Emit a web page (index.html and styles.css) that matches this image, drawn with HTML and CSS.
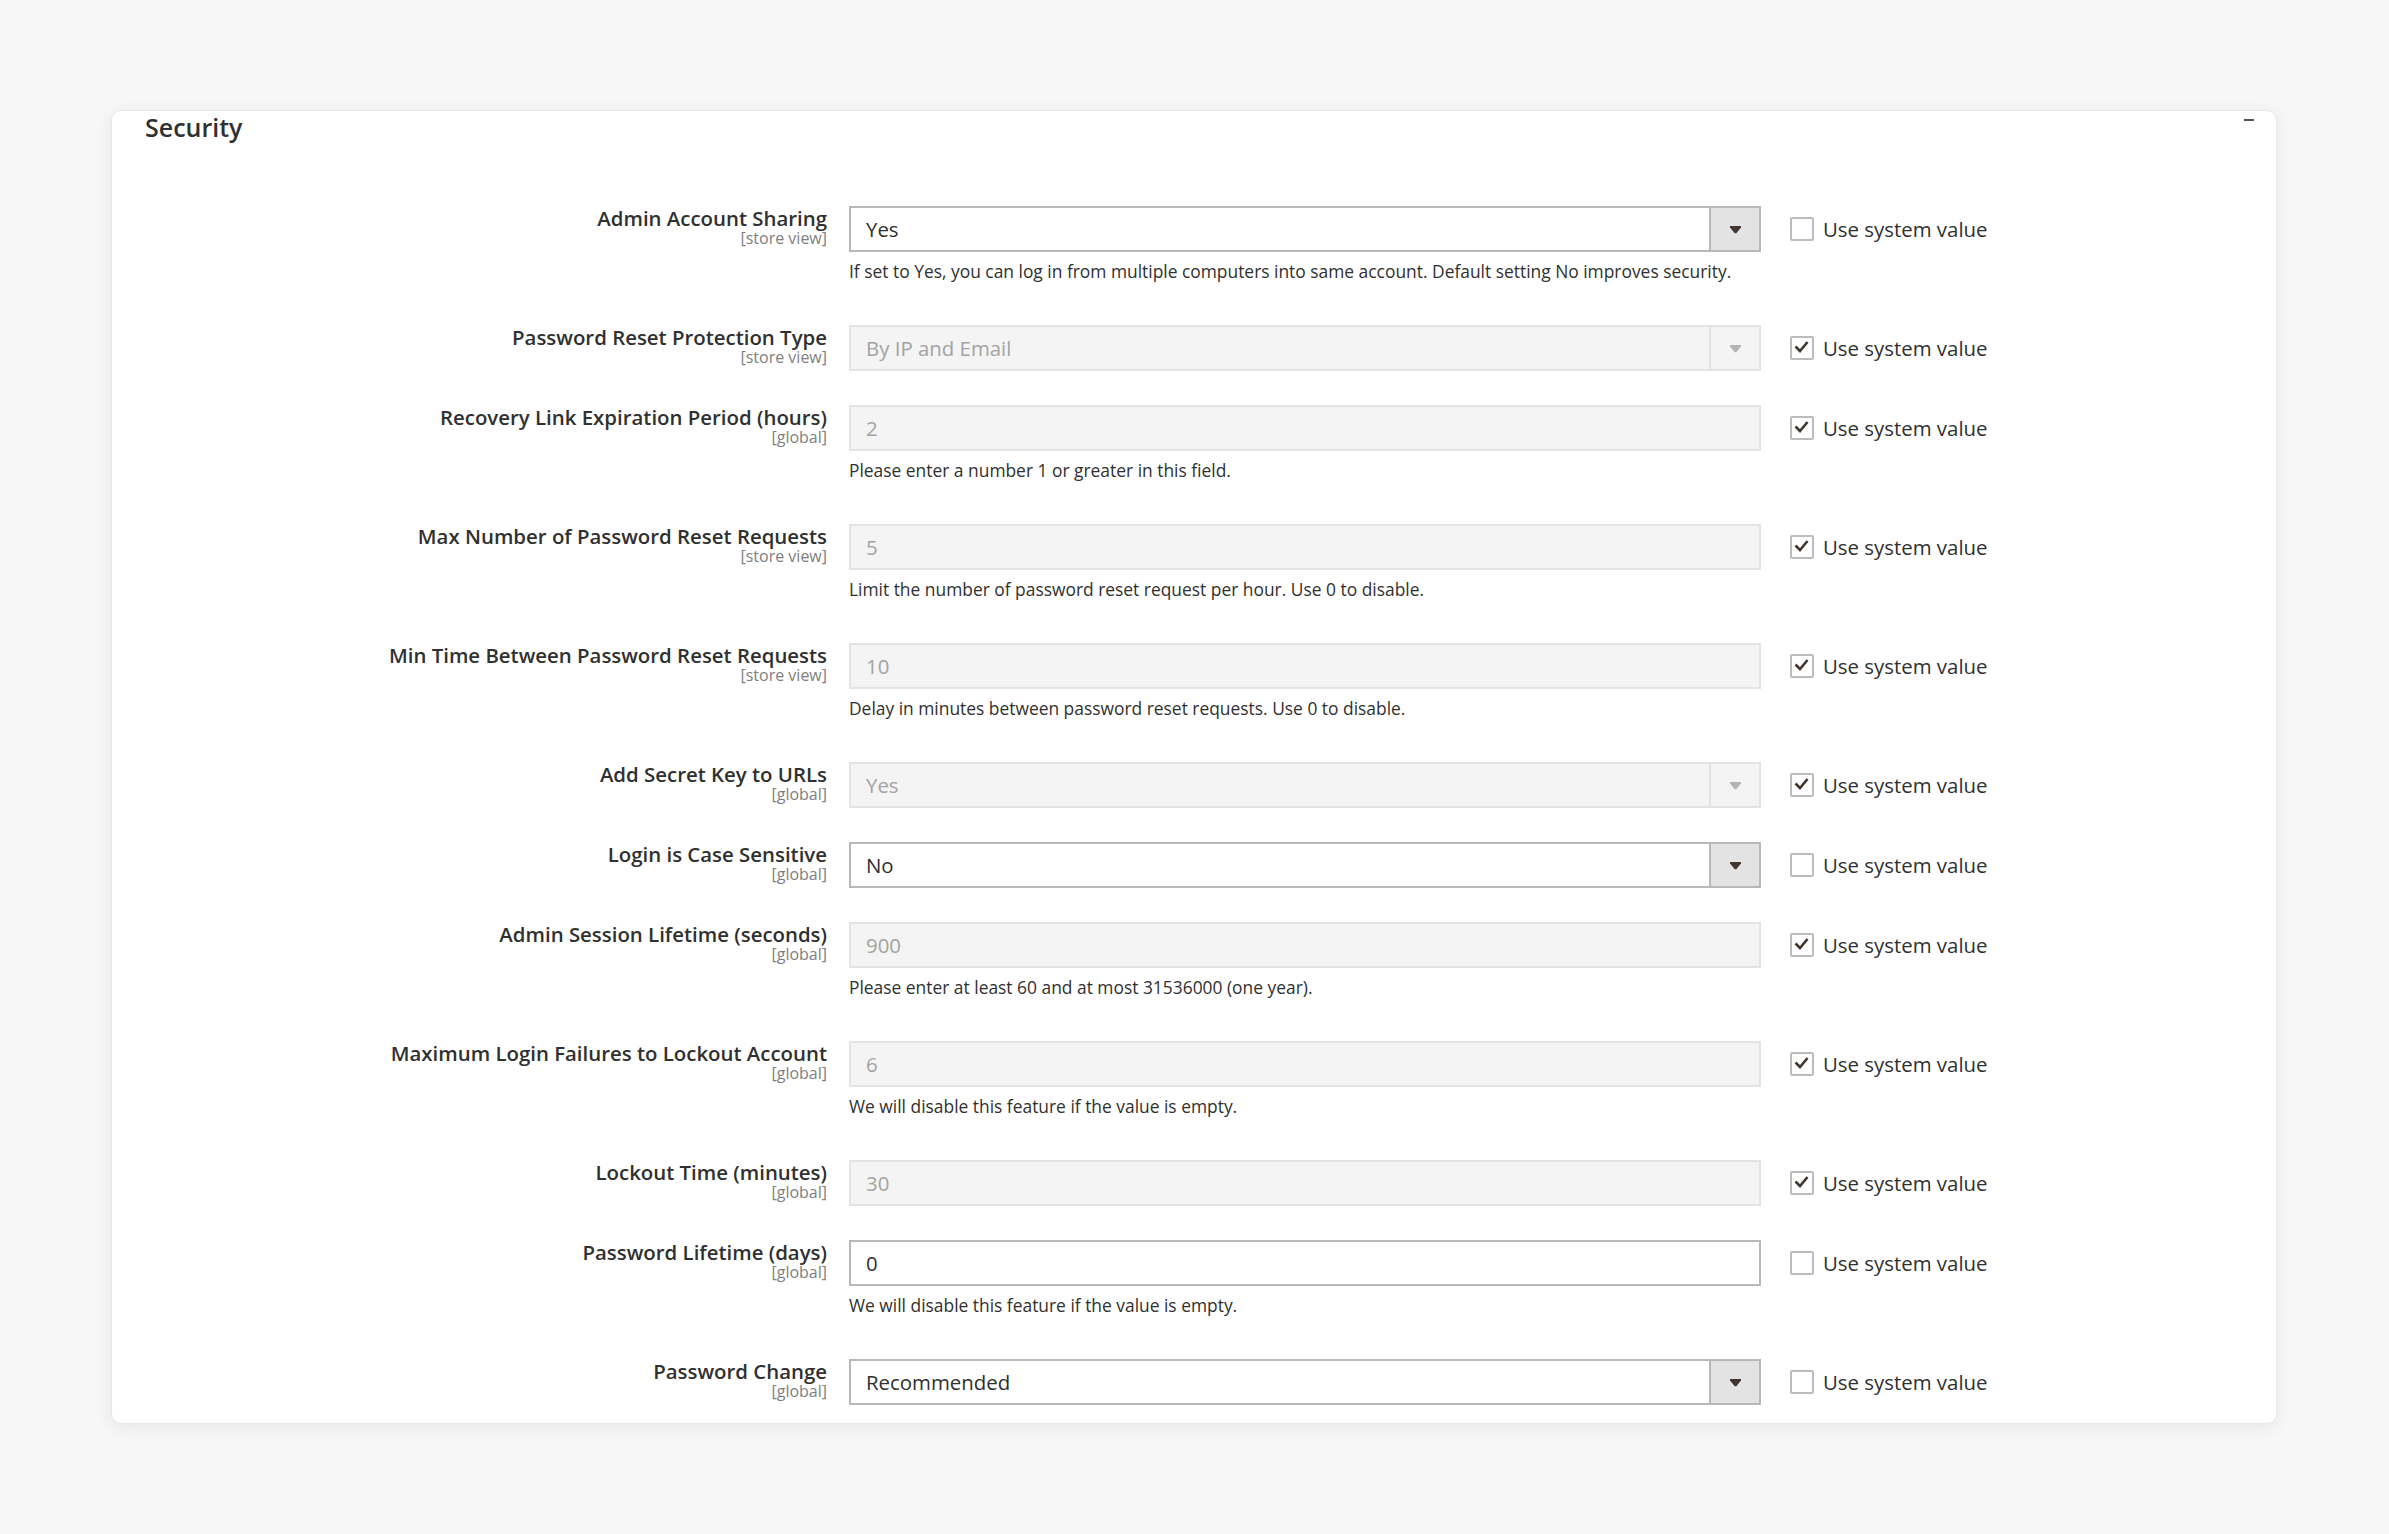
FILE: index.html
```html
<html lang="en">
  <head>
    <meta charset="utf-8">
    <meta name="viewport" content="width=device-width, initial-scale=1">
    <link rel="stylesheet" href="styles.css">
  </head>
  <body>
  <div class="page">
    <div class="card">
      <div class="card_head">
        <div class="card_head__title">Security</div>
        <div class="card_head__toggle"></div>
      </div>

      <div class="form">

        <div class="row">
          <div class="label"><div class="label__title">Admin Account Sharing</div><div class="label__scope">[store view]</div></div>
          <div class="control">
            <div class="field field__select"><div class="field__value">Yes</div><div class="field__arrow"><svg width="11" height="8" viewBox="0 0 11 8"><path d="M0 0H11V1.6L6.3 7.2H4.7L0 1.6Z"/></svg></div></div>
            <div class="note">If set to Yes, you can log in from multiple computers into same account. Default setting No improves security.</div>
          </div>
          <div class="use"><div class="check"></div><span>Use system value</span></div>
        </div>

        <div class="row">
          <div class="label"><div class="label__title">Password Reset Protection Type</div><div class="label__scope">[store view]</div></div>
          <div class="control">
            <div class="field field__select field__disabled"><div class="field__value">By IP and Email</div><div class="field__arrow"><svg width="11" height="8" viewBox="0 0 11 8"><path d="M0 0H11V1.6L6.3 7.2H4.7L0 1.6Z"/></svg></div></div>
          </div>
          <div class="use"><div class="check check__on"><svg width="20" height="20" viewBox="0 0 20 20"><path d="M3.5 8.5L8 13L15.5 4"/></svg></div><span>Use system value</span></div>
        </div>

        <div class="row">
          <div class="label"><div class="label__title">Recovery Link Expiration Period (hours)</div><div class="label__scope">[global]</div></div>
          <div class="control">
            <div class="field field__disabled"><div class="field__value">2</div></div>
            <div class="note">Please enter a number 1 or greater in this field.</div>
          </div>
          <div class="use"><div class="check check__on"><svg width="20" height="20" viewBox="0 0 20 20"><path d="M3.5 8.5L8 13L15.5 4"/></svg></div><span>Use system value</span></div>
        </div>

        <div class="row">
          <div class="label"><div class="label__title">Max Number of Password Reset Requests</div><div class="label__scope">[store view]</div></div>
          <div class="control">
            <div class="field field__disabled"><div class="field__value">5</div></div>
            <div class="note">Limit the number of password reset request per hour. Use 0 to disable.</div>
          </div>
          <div class="use"><div class="check check__on"><svg width="20" height="20" viewBox="0 0 20 20"><path d="M3.5 8.5L8 13L15.5 4"/></svg></div><span>Use system value</span></div>
        </div>

        <div class="row">
          <div class="label"><div class="label__title">Min Time Between Password Reset Requests</div><div class="label__scope">[store view]</div></div>
          <div class="control">
            <div class="field field__disabled"><div class="field__value">10</div></div>
            <div class="note">Delay in minutes between password reset requests. Use 0 to disable.</div>
          </div>
          <div class="use"><div class="check check__on"><svg width="20" height="20" viewBox="0 0 20 20"><path d="M3.5 8.5L8 13L15.5 4"/></svg></div><span>Use system value</span></div>
        </div>

        <div class="row">
          <div class="label"><div class="label__title">Add Secret Key to URLs</div><div class="label__scope">[global]</div></div>
          <div class="control">
            <div class="field field__select field__disabled"><div class="field__value">Yes</div><div class="field__arrow"><svg width="11" height="8" viewBox="0 0 11 8"><path d="M0 0H11V1.6L6.3 7.2H4.7L0 1.6Z"/></svg></div></div>
          </div>
          <div class="use"><div class="check check__on"><svg width="20" height="20" viewBox="0 0 20 20"><path d="M3.5 8.5L8 13L15.5 4"/></svg></div><span>Use system value</span></div>
        </div>

        <div class="row">
          <div class="label"><div class="label__title">Login is Case Sensitive</div><div class="label__scope">[global]</div></div>
          <div class="control">
            <div class="field field__select"><div class="field__value">No</div><div class="field__arrow"><svg width="11" height="8" viewBox="0 0 11 8"><path d="M0 0H11V1.6L6.3 7.2H4.7L0 1.6Z"/></svg></div></div>
          </div>
          <div class="use"><div class="check"></div><span>Use system value</span></div>
        </div>

        <div class="row">
          <div class="label"><div class="label__title">Admin Session Lifetime (seconds)</div><div class="label__scope">[global]</div></div>
          <div class="control">
            <div class="field field__disabled"><div class="field__value">900</div></div>
            <div class="note">Please enter at least 60 and at most 31536000 (one year).</div>
          </div>
          <div class="use"><div class="check check__on"><svg width="20" height="20" viewBox="0 0 20 20"><path d="M3.5 8.5L8 13L15.5 4"/></svg></div><span>Use system value</span></div>
        </div>

        <div class="row">
          <div class="label"><div class="label__title">Maximum Login Failures to Lockout Account</div><div class="label__scope">[global]</div></div>
          <div class="control">
            <div class="field field__disabled"><div class="field__value">6</div></div>
            <div class="note">We will disable this feature if the value is empty.</div>
          </div>
          <div class="use"><div class="check check__on"><svg width="20" height="20" viewBox="0 0 20 20"><path d="M3.5 8.5L8 13L15.5 4"/></svg></div><span>Use system value</span></div>
        </div>

        <div class="row">
          <div class="label"><div class="label__title">Lockout Time (minutes)</div><div class="label__scope">[global]</div></div>
          <div class="control">
            <div class="field field__disabled"><div class="field__value">30</div></div>
          </div>
          <div class="use"><div class="check check__on"><svg width="20" height="20" viewBox="0 0 20 20"><path d="M3.5 8.5L8 13L15.5 4"/></svg></div><span>Use system value</span></div>
        </div>

        <div class="row">
          <div class="label"><div class="label__title">Password Lifetime (days)</div><div class="label__scope">[global]</div></div>
          <div class="control">
            <div class="field"><div class="field__value">0</div></div>
            <div class="note">We will disable this feature if the value is empty.</div>
          </div>
          <div class="use"><div class="check"></div><span>Use system value</span></div>
        </div>

        <div class="row">
          <div class="label"><div class="label__title">Password Change</div><div class="label__scope">[global]</div></div>
          <div class="control">
            <div class="field field__select"><div class="field__value">Recommended</div><div class="field__arrow"><svg width="11" height="8" viewBox="0 0 11 8"><path d="M0 0H11V1.6L6.3 7.2H4.7L0 1.6Z"/></svg></div></div>
          </div>
          <div class="use"><div class="check"></div><span>Use system value</span></div>
        </div>

      </div>
    </div>
  </div>
  </body>
</html>
```

FILE: styles.css
```css
html, body {
  padding: 0px; margin: 0px;
  background: #f7f7f7;
  font-family: "Open Sans", "Liberation Sans", sans-serif;
  color: #303030;
}

.page {
  padding: 110px 112px 0 111px;
}

.card {
  background: #fff;
  border: 1px solid #e8e8e8;
  border-radius: 10px;
  box-shadow: 0 4px 18px rgba(0, 0, 0, 0.07);
  padding-bottom: 18px;
}

.card_head {
  display: flex;
  justify-content: space-between;
  align-items: flex-start;
  padding: 2px 22px 0 33px;
}
.card_head__title {
  font-size: 25px;
  line-height: 28px;
  font-weight: 600;
}
.card_head__toggle {
  width: 10px; height: 2px;
  margin-top: 6px;
  background: #555;
}

.form {
  margin-top: 65px;
}

.row {
  display: flex;
  align-items: flex-start;
  margin-bottom: 34px;
}
.row:last-child {
  margin-bottom: 0;
}

.label {
  flex: none;
  width: 737px;
  box-sizing: border-box;
  padding: 2px 22px 0 0;
  text-align: right;
}
.label__title {
  font-size: 20.4px;
  line-height: 20px;
  font-weight: 600;
}
.label__scope {
  font-size: 16px;
  line-height: 20px;
  color: #808080;
}

.control {
  flex: none;
  width: 912px;
}

.field {
  height: 46px;
  box-sizing: border-box;
  border: 2px solid #b8b8b8;
  background: #fff;
  display: flex;
  align-items: stretch;
  font-size: 20.4px;
}
.field__value {
  flex: 1;
  display: flex;
  align-items: center;
  padding-left: 15px;
}
.field__arrow {
  width: 48px;
  border-left: 2px solid #b8b8b8;
  background: #e3e3e3;
  display: flex;
  align-items: center;
  justify-content: center;
}
.field__arrow svg {
  fill: #41362f;
  margin-top: 2px;
}

.field__disabled {
  background: #f4f4f4;
  border-color: #e3e3e3;
  color: #a3a3a3;
}
.field__disabled .field__arrow {
  background: transparent;
  border-left-color: #e3e3e3;
}
.field__disabled .field__arrow svg {
  fill: #b5b5b5;
}

.note {
  font-size: 17.4px;
  line-height: 24px;
  margin-top: 7px;
  margin-bottom: 8px;
}

.use {
  height: 46px;
  margin-left: 29px;
  display: flex;
  align-items: center;
  font-size: 20.4px;
}
.check {
  width: 24px; height: 24px;
  box-sizing: border-box;
  border: 2px solid #bcbcbc;
  border-radius: 2px;
  margin-right: 9px;
  background: #fff;
}
.check svg {
  display: block;
  fill: none;
  stroke: #41362f;
  stroke-width: 2.6;
}
```
